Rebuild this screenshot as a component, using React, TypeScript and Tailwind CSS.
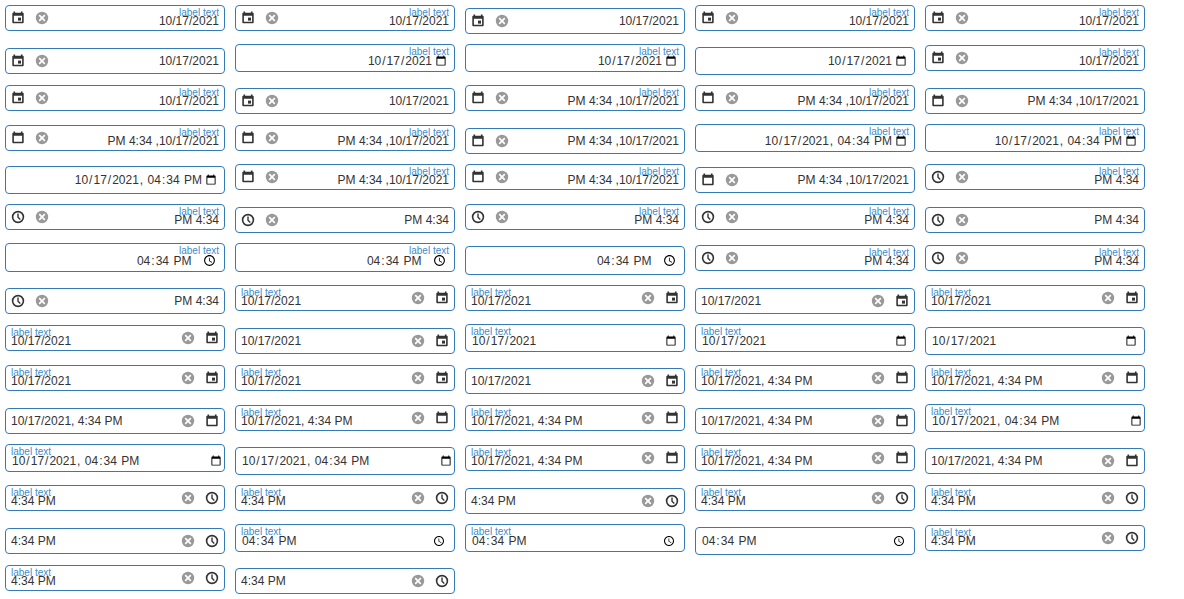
import React, { useId } from "react";

type Kind = "date" | "datetime" | "time";

interface FieldProps {
  kind: Kind;
  native: boolean;
  labelled: boolean;
  rtl: boolean;
}

const TEXT: Record<Kind, string> = {
  date: "10/17/2021",
  datetime: "10/17/2021, 4:34 PM",
  time: "4:34 PM",
};

const NATIVE = {
  date: { type: "date", value: "2021-10-17" },
  datetime: { type: "datetime-local", value: "2021-10-17T16:34" },
  time: { type: "time", value: "16:34" },
};

function Icon({ name }: { name: Kind | "clear" }) {
  return (
    <svg viewBox="0 0 16 16" className="size-4" fill="none" aria-hidden="true">
      {name === "clear" && (
        <>
          <circle cx="8" cy="8" r="6.2" fill="currentColor" />
          <path d="M5.200 5.200l5.600 5.600M10.800 5.200l-5.600 5.600" stroke="#fff" strokeWidth="1.7" />
        </>
      )}
      {name === "time" && (
        <>
          <circle cx="8" cy="8" r="5.400" stroke="currentColor" strokeWidth="1.6" />
          <path d="M8 4.600v3.600l2.300 2.200" stroke="currentColor" strokeWidth="1.400" />
        </>
      )}
      {(name === "date" || name === "datetime") && (
        <path
          fill="currentColor"
          fillRule="evenodd"
          d="M3.500 1.600h1.600v1.100h5.800V1.600h1.600v1.100h.3a.9.9 0 0 1 .9.9v8.700a.9.9 0 0 1-.9.9H3.200a.9.9 0 0 1-.9-.9V3.600a.9.9 0 0 1 .9-.9h.3zM3.900 5.700v6h8.200v-6z"
        />
      )}
      {name === "date" && <path fill="currentColor" d="M8 7.600h3v3H8z" />}
    </svg>
  );
}

function Field({ kind, native, labelled, rtl }: FieldProps) {
  const id = useId();
  const pad = labelled ? "pt-2 pb-0.5" : "py-[5px]";
  const name = labelled ? undefined : kind;
  const height = kind === "time" && rtl ? "h-[27px]" : "h-[26px]";
  const side = rtl
    ? "px-[5px] [&::-webkit-datetime-edit]:justify-end"
    : kind === "datetime"
      ? "pl-[5px]"
      : "px-[5px]";
  return (
    <div
      dir={rtl ? "rtl" : "ltr"}
      className="relative m-[5px] flex w-[220px] items-baseline rounded border border-[#337ab7] bg-white"
    >
      {native ? (
        <input
          id={id}
          type={NATIVE[kind].type}
          defaultValue={NATIVE[kind].value}
          aria-label={name}
          className={`min-w-0 flex-1 bg-transparent text-xs/[16px] outline-none ${height} ${side} ${pad}`}
        />
      ) : (
        <>
          <input
            id={id}
            type="text"
            defaultValue={TEXT[kind]}
            aria-label={name}
            className={`min-w-0 flex-1 bg-transparent px-[5px] text-xs/[14px] outline-none ${pad}`}
          />
          <button
            type="button"
            aria-label="Clear"
            className="flex w-6 items-center justify-center self-stretch text-[#999]"
          >
            <Icon name="clear" />
          </button>
          <button
            type="button"
            aria-label="Select"
            className="flex w-6 items-center justify-center self-stretch text-[#333]"
          >
            <Icon name={kind} />
          </button>
        </>
      )}
      {labelled && (
        <label
          htmlFor={id}
          className="pointer-events-none absolute start-[5px] top-0 text-[10px]/[14px] text-[#428bca]"
        >
          label text
        </label>
      )}
    </div>
  );
}

const KINDS: Kind[] = ["date", "datetime", "time"];
const LABELLED = [true, true, false];
const MODES = [false, false, true, false];

const FIELDS: FieldProps[] = [true, false].flatMap((rtl) =>
  KINDS.flatMap((kind) =>
    MODES.flatMap((native) =>
      LABELLED.map((labelled) => ({ kind, native, labelled, rtl }))
    )
  )
);

export default function App() {
  return (
    <main className="flex flex-wrap items-baseline bg-white font-['Liberation_Sans',Arial,sans-serif] text-[#333]">
      {FIELDS.map((field, index) => (
        <Field key={index} {...field} />
      ))}
    </main>
  );
}
